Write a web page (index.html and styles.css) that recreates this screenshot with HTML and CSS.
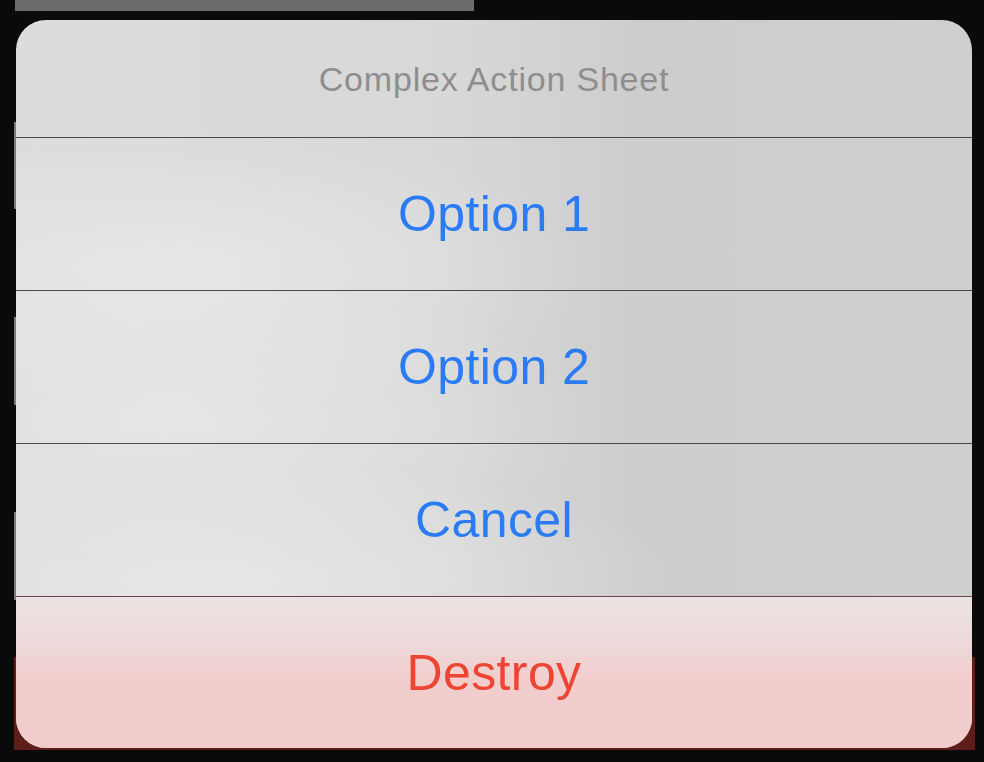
FILE: index.html
```html
<!DOCTYPE html>
<html lang="en">
<head>
<meta charset="utf-8">
<title>Complex Action Sheet</title>
<link rel="stylesheet" href="styles.css">
</head>
<body>
<div class="screen">
  <div class="backdrop">
    <div class="bg-bar"></div>
    <div class="bg-strip s1"></div>
    <div class="bg-strip s2"></div>
    <div class="bg-strip s3"></div>
    <div class="bg-red"></div>
  </div>
  <div class="sheet">
    <div class="sheet-title">Complex Action Sheet</div>
    <div class="action">Option 1</div>
    <div class="action">Option 2</div>
    <div class="action">Cancel</div>
    <div class="action destructive">Destroy</div>
  </div>
</div>
</body>
</html>
```

FILE: styles.css
```css
html, body {
  margin: 0;
  padding: 0;
  background: #0a0a0a;
}

.screen {
  position: relative;
  width: 984px;
  height: 762px;
  overflow: hidden;
  font-family: "Liberation Sans", Arial, sans-serif;
}

.backdrop {
  position: absolute;
  inset: 0;
}

.bg-bar {
  position: absolute;
  left: 15px;
  top: 0;
  width: 459px;
  height: 11px;
  background: #6b6b6b;
}

.bg-strip {
  position: absolute;
  left: 14px;
  width: 2px;
  background: #7a7a7a;
}
.s1 { top: 122px; height: 87px; }
.s2 { top: 317px; height: 88px; }
.s3 { top: 512px; height: 88px; }

.bg-red {
  position: absolute;
  left: 14px;
  top: 657px;
  width: 961px;
  height: 93px;
  background: #5f1d19;
}

.sheet {
  position: relative;
  margin: 20px 0 0 16px;
  width: 956px;
  height: 728px;
  border-radius: 30px;
  overflow: hidden;
  display: flex;
  flex-direction: column;
  background:
    radial-gradient(ellipse 420px 140px at 160px 250px, rgba(240,240,240,0.55), rgba(240,240,240,0) 100%),
    radial-gradient(ellipse 420px 140px at 160px 400px, rgba(240,240,240,0.5), rgba(240,240,240,0) 100%),
    radial-gradient(ellipse 460px 120px at 200px 560px, rgba(240,238,238,0.6), rgba(240,238,238,0) 100%),
    linear-gradient(90deg, #dcdcdc 0%, #d8d8d8 45%, #cdcdcd 65%, #cfcfcf 100%);
}

.sheet-title {
  height: 117px;
  flex: none;
  display: flex;
  align-items: center;
  justify-content: center;
  font-size: 34px;
  color: #8e8e8e;
  letter-spacing: 0.8px;
  padding-top: 2px;
  box-sizing: border-box;
}

.action {
  height: 153px;
  flex: none;
  box-sizing: border-box;
  border-top: 1px solid #4a4a4a;
  display: flex;
  align-items: center;
  justify-content: center;
  font-size: 50px;
  letter-spacing: 0.4px;
  color: #2b7cf4;
}

.action.destructive {
  height: 152px;
  flex: 1;
  border-top-color: #6a4a4a;
  color: #ee4433;
  background: linear-gradient(180deg, #ebe3e3 0%, #eddada 28%, #f2cdcd 55%, #f2cccc 100%);
}
```
